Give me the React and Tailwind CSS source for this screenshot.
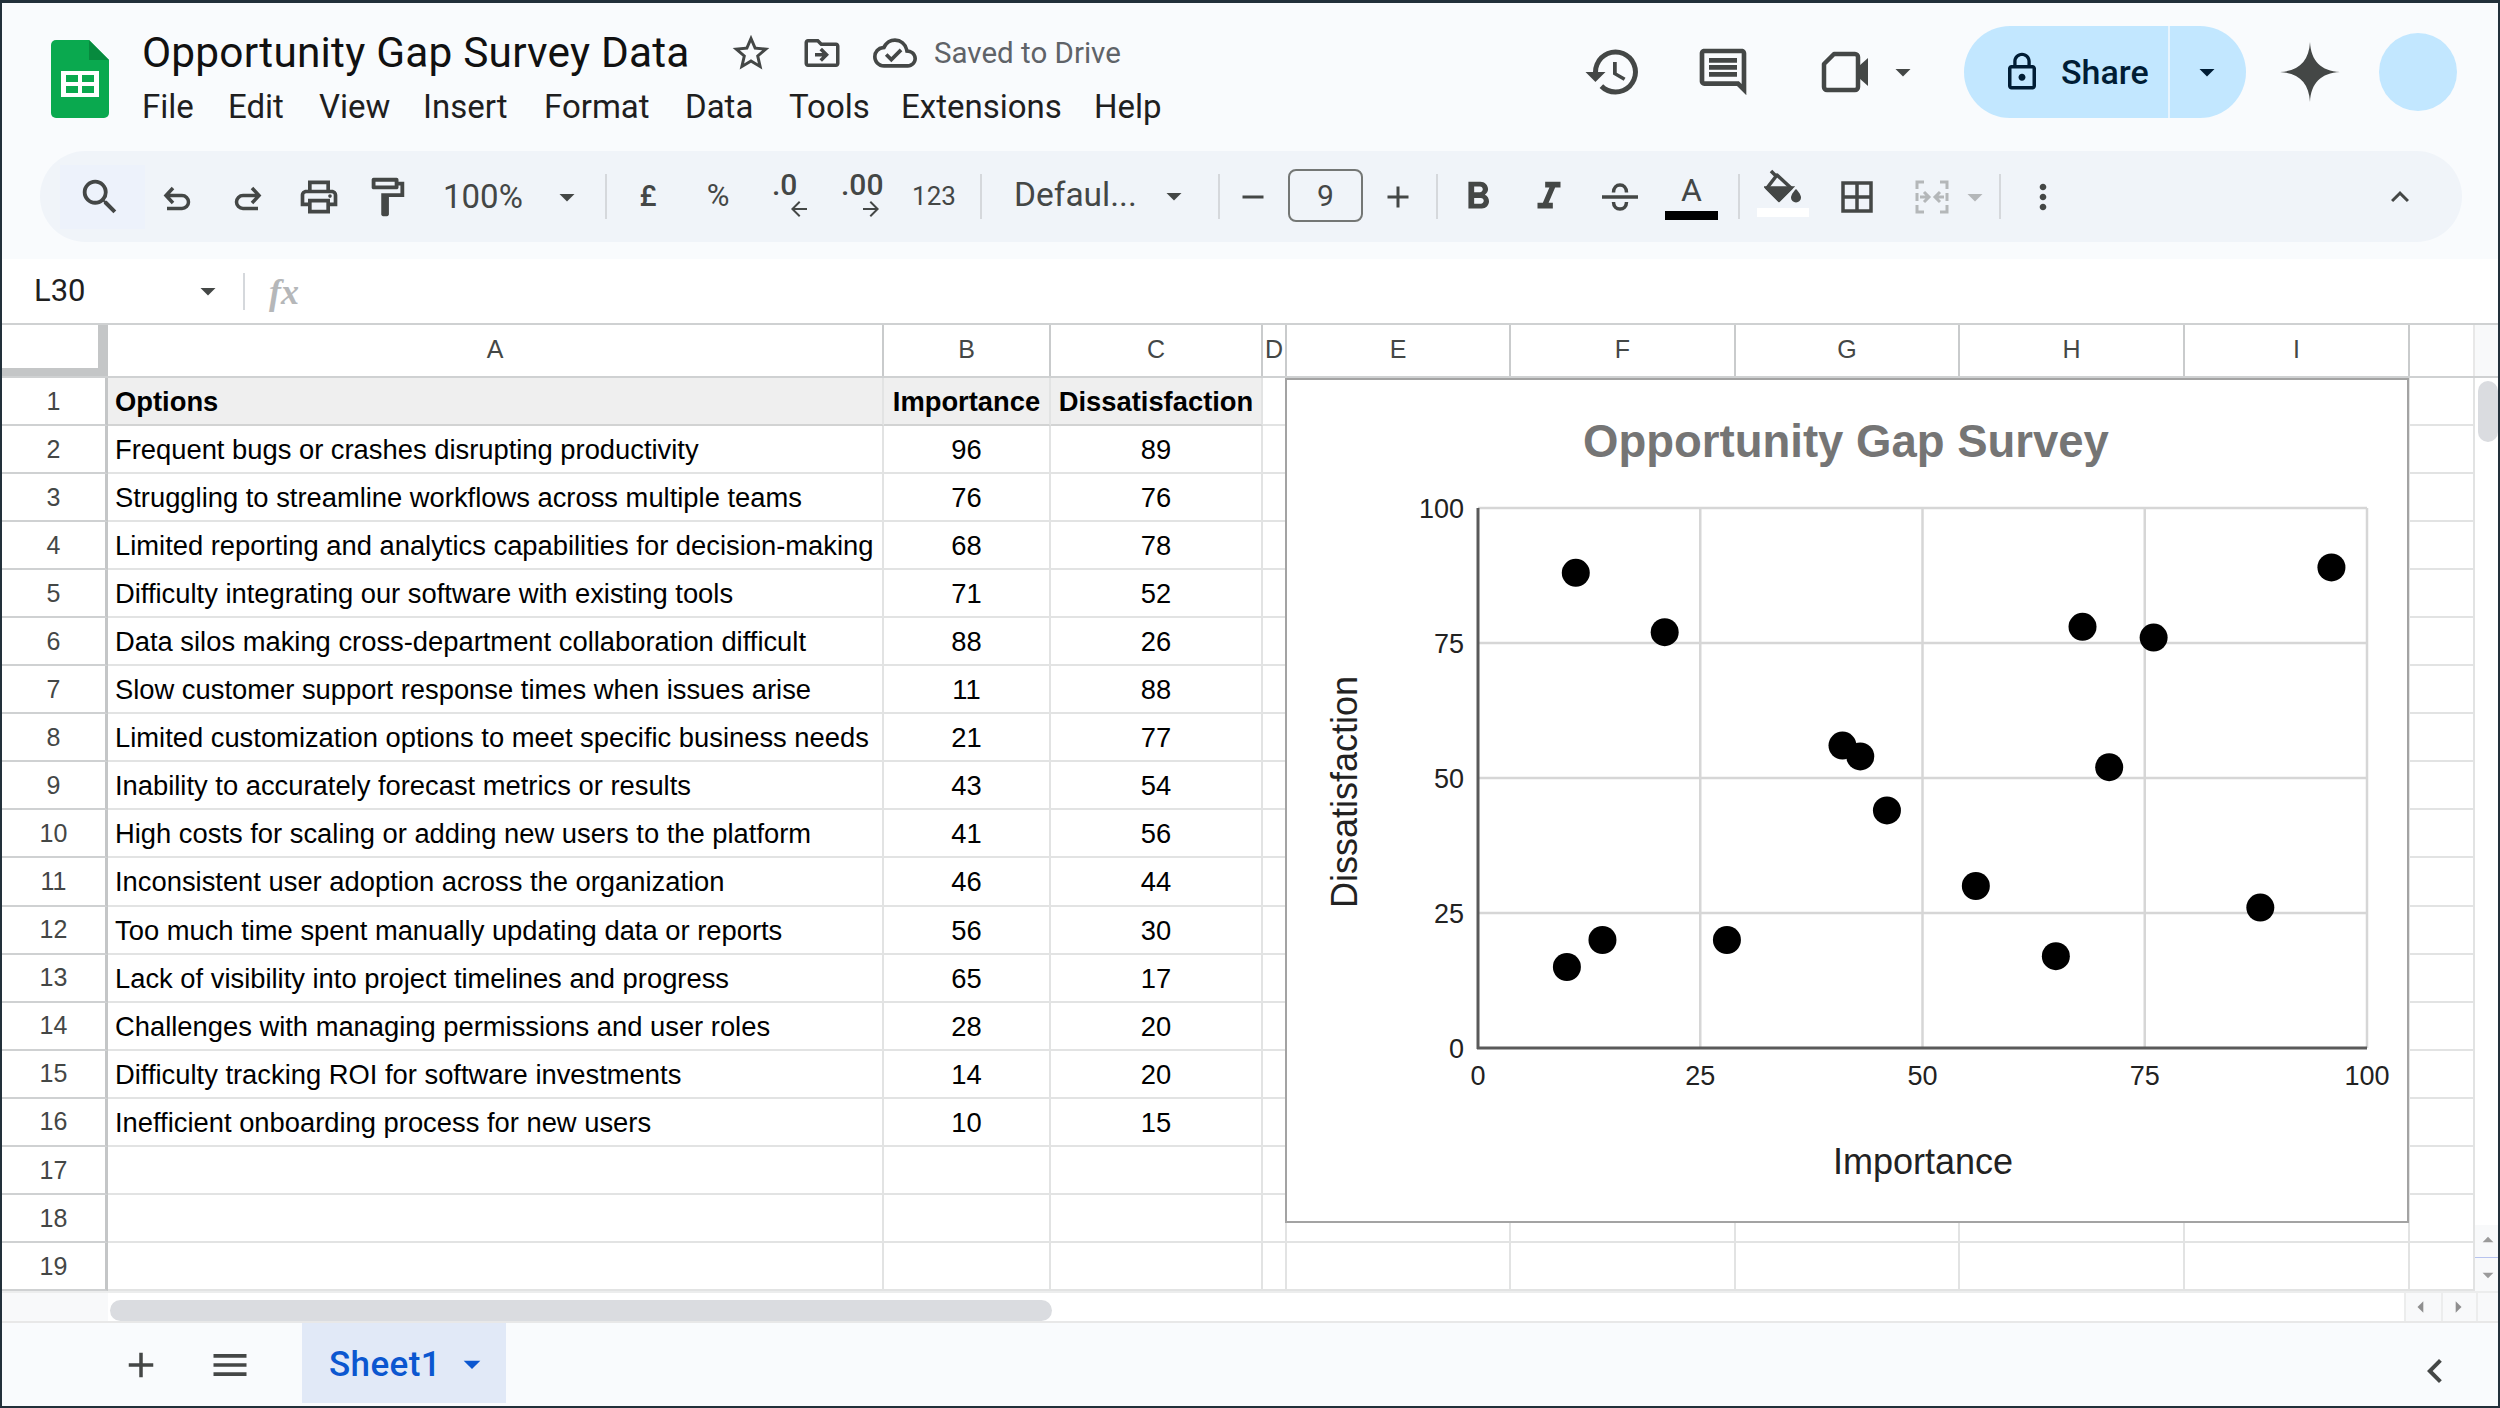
import React from "react";
import {
  MdStarBorder, MdOutlineDriveFileMove, MdOutlineCloudDone, MdHistory, MdOutlineComment,
  MdArrowDropDown, MdLockOutline, MdSearch, MdOutlinePrint, MdOutlineFormatPaint, MdAdd, MdRemove,
  MdFormatBold, MdFormatItalic, MdBorderAll, MdMoreVert, MdKeyboardArrowUp,
  MdMenu, MdChevronLeft, MdArrowBack, MdArrowForward, MdArrowDropUp, MdArrowLeft, MdArrowRight,
} from "react-icons/md";

const rows = [
  ["Options", "Importance", "Dissatisfaction"],
  ["Frequent bugs or crashes disrupting productivity", "96", "89"],
  ["Struggling to streamline workflows across multiple teams", "76", "76"],
  ["Limited reporting and analytics capabilities for decision-making", "68", "78"],
  ["Difficulty integrating our software with existing tools", "71", "52"],
  ["Data silos making cross-department collaboration difficult", "88", "26"],
  ["Slow customer support response times when issues arise", "11", "88"],
  ["Limited customization options to meet specific business needs", "21", "77"],
  ["Inability to accurately forecast metrics or results", "43", "54"],
  ["High costs for scaling or adding new users to the platform", "41", "56"],
  ["Inconsistent user adoption across the organization", "46", "44"],
  ["Too much time spent manually updating data or reports", "56", "30"],
  ["Lack of visibility into project timelines and progress", "65", "17"],
  ["Challenges with managing permissions and user roles", "28", "20"],
  ["Difficulty tracking ROI for software investments", "14", "20"],
  ["Inefficient onboarding process for new users", "10", "15"],
  ["", "", ""],
  ["", "", ""],
  ["", "", ""],
];

const X = (v) => 1478 + v * 8.89;
const Y = (v) => 1048 - v * 5.4;
const points = rows.slice(1, 16).map((r) => [Number(r[1]), Number(r[2])]);
const ticks = [0, 25, 50, 75, 100];

function Sep({ className }) {
  return <div className={"w-[2px] h-[45px] bg-[#d5d8dc] shrink-0 " + className} />;
}

function Logo() {
  return (
    <svg width="58" height="78" viewBox="0 0 58 78" className="shrink-0">
      <path d="M5 0H38L58 20V73a5 5 0 0 1-5 5H5a5 5 0 0 1-5-5V5a5 5 0 0 1 5-5z" fill="#0aa94f" />
      <path d="M38 0L58 20H38z" fill="#078a3e" />
      <rect x="10" y="31" width="38" height="26" fill="#fff" />
      <rect x="15" y="35" width="12" height="7" fill="#0aa94f" />
      <rect x="31" y="35" width="12" height="7" fill="#0aa94f" />
      <rect x="15" y="46" width="12" height="7" fill="#0aa94f" />
      <rect x="31" y="46" width="12" height="7" fill="#0aa94f" />
    </svg>
  );
}

function MergeIcon() {
  return (
    <svg width="36" height="36" viewBox="0 0 36 36" fill="none" stroke="#b4b7b9" strokeWidth="3" className="shrink-0">
      <path d="M10 3H3V10M3 14v8M3 26v7h7M26 3h7v7M33 14v8M33 26v7h-7" />
      <path d="M6 18h9M10 13l5 5-5 5M30 18h-9M26 13l-5 5 5 5" />
    </svg>
  );
}

function UndoIcon({ className }) {
  return (
    <svg width="28" height="26" viewBox="0 0 28 26" fill="none" stroke="#444746" strokeWidth="3.5" className={"shrink-0 " + className}>
      <path d="M10 2L3 9.5L10 17M3 9.5H19a6.5 6.5 0 0 1 0 13H4" />
    </svg>
  );
}

function StrikeIcon({ className }) {
  return (
    <svg width="38" height="30" viewBox="0 0 38 30" fill="none" stroke="#444746" strokeWidth="3.5" className={"shrink-0 " + className}>
      <path d="M1 15H37M25.5 10.5C25.5 5.5 22.5 3 19 3C15.5 3 12.5 5.5 12.5 10.5M12.5 20C12.5 24.5 15.5 27 19 27C22.5 27 25.5 24.5 25.5 20" />
    </svg>
  );
}

function FillIcon() {
  return (
    <svg width="38" height="34" viewBox="0 0 38 34" fill="none" stroke="#444746" strokeWidth="3.5" className="shrink-0 -mt-[8px]">
      <path d="M7 2L13 8M13 6L27 19L15 31L3 19z" strokeLinejoin="round" />
      <path d="M3 19H27L15 31z" fill="#444746" />
      <path d="M32 20C32 20 27 25 27 28.5a5 5 0 0 0 10 0C37 25 32 20 32 20z" fill="#444746" stroke="none" />
    </svg>
  );
}

function VideoIcon({ className }) {
  return (
    <svg width="50" height="42" viewBox="0 0 50 42" className={"shrink-0 " + className}>
      <path d="M13 3H34a3 3 0 0 1 3 3V36a3 3 0 0 1-3 3H6a3 3 0 0 1-3-3V13z" fill="none" stroke="#444746" strokeWidth="4.5" strokeLinejoin="round" />
      <path d="M38 15L47 7V35L38 27z" fill="#444746" />
    </svg>
  );
}

function Header() {
  return (
    <div className="h-[148px] flex pl-[49px] pt-[20px]">
      <div className="pt-[17px]"><Logo /></div>
      <div className="ml-[33px] flex flex-col">
        <div className="flex items-center h-[60px]">
          <div className="w-[545px] text-[42.4px] leading-[60px] text-[#111] font-['Roboto',sans-serif] whitespace-nowrap tracking-[0.2px]">Opportunity Gap Survey Data</div>
          <MdStarBorder className="ml-[42px] w-[44px] h-[44px] text-[#444746] shrink-0" />
          <MdOutlineDriveFileMove className="ml-[28px] w-[42px] h-[42px] text-[#444746] shrink-0" />
          <MdOutlineCloudDone className="ml-[30px] w-[44px] h-[44px] text-[#444746] shrink-0" />
          <div className="ml-[17px] text-[29.5px] text-[#5f6368] font-['Roboto',sans-serif] whitespace-nowrap">Saved to Drive</div>
        </div>
        <div className="flex items-center h-[44px] mt-[2px] text-[33px] text-[#1f1f1f] font-['Roboto',sans-serif] whitespace-nowrap">
          <span className="w-[50px]">File</span>
          <span className="ml-[36px] w-[55px]">Edit</span>
          <span className="ml-[36px] w-[68px]">View</span>
          <span className="ml-[36px] w-[85px]">Insert</span>
          <span className="ml-[36px] w-[105px]">Format</span>
          <span className="ml-[36px] w-[68px]">Data</span>
          <span className="ml-[36px] w-[76px]">Tools</span>
          <span className="ml-[36px] w-[157px]">Extensions</span>
          <span className="ml-[36px] w-[68px]">Help</span>
        </div>
      </div>
      <div className="ml-auto flex items-center h-[92px] mt-[3px] pr-[41px] shrink-0 text-[#444746]">
        <MdHistory className="w-[60px] h-[60px] shrink-0" />
        <MdOutlineComment className="ml-[52px] w-[56px] h-[56px] shrink-0" />
        <VideoIcon className="ml-[70px]" />
        <MdArrowDropDown className="ml-[14px] w-[36px] h-[36px] shrink-0" />
        <div className="ml-[43px] w-[282px] h-[92px] rounded-full bg-[#c2e7ff] flex items-center text-[#001d35] shrink-0">
          <div className="w-[206px] h-full flex items-center pl-[37px] border-r-2 border-[#e8f4fd]">
            <MdLockOutline className="w-[42px] h-[42px] shrink-0" />
            <span className="ml-[18px] text-[34px] font-medium font-['Roboto',sans-serif]">Share</span>
          </div>
          <MdArrowDropDown className="ml-[19px] w-[36px] h-[36px] shrink-0" />
        </div>
        <svg width="60" height="60" viewBox="0 0 60 60" className="ml-[34px] shrink-0">
          <path d="M30 0C31 19 41 29 60 30C41 31 31 41 30 60C29 41 19 31 0 30C19 29 29 19 30 0z" fill="#444746" />
        </svg>
        <div className="ml-[39px] w-[78px] h-[78px] rounded-full bg-[#c2e7ff] shrink-0" />
      </div>
    </div>
  );
}

function Toolbar() {
  const ink = "shrink-0 w-[36px] h-[36px] text-[#444746]";
  const big = "shrink-0 w-[46px] h-[46px] text-[#444746]";
  const label = "shrink-0 text-[#444746] font-['Roboto',sans-serif] whitespace-nowrap";
  return (
    <div className="ml-[38px] w-[2422px] h-[91px] rounded-full bg-[#f0f4f9] flex items-center pl-[20px] pr-[44px]">
      <div className="w-[85px] h-[64px] bg-[#edf2fb] flex items-center pl-[17px] shrink-0">
        <MdSearch className="w-[46px] h-[46px] text-[#444746]" />
      </div>
      <UndoIcon className="ml-[18px] mt-[4px]" />
      <UndoIcon className="ml-[43px] mt-[4px] -scale-x-100" />
      <MdOutlinePrint className="ml-[35px] shrink-0 w-[44px] h-[44px] text-[#444746]" />
      <MdOutlineFormatPaint className="ml-[23px] shrink-0 w-[46px] h-[46px] text-[#444746]" />
      <div className={"ml-[33px] w-[84px] text-[33px] " + label}>100%</div>
      <MdArrowDropDown className={"ml-[22px] " + ink} />
      <Sep className="ml-[20px]" />
      <div className={"ml-[23px] w-[36px] text-center text-[29px] font-medium " + label}>£</div>
      <div className={"ml-[34px] w-[36px] text-center text-[31px] " + label}>%</div>
      <div className="ml-[36px] w-[50px] flex flex-col items-start shrink-0 text-[#444746]">
        <span className="text-[30px] leading-[26px] font-medium font-['Roboto',sans-serif]">.0</span>
        <MdArrowBack className="w-[24px] h-[24px] ml-[15px] -mt-[1px]" />
      </div>
      <div className="ml-[14px] w-[50px] flex flex-col items-start pl-[5px] shrink-0 text-[#444746]">
        <span className="text-[30px] leading-[26px] font-medium font-['Roboto',sans-serif]">.00</span>
        <MdArrowForward className="w-[24px] h-[24px] ml-[18px] -mt-[1px]" />
      </div>
      <div className={"ml-[23px] w-[50px] text-center text-[26px] " + label}>123</div>
      <Sep className="ml-[21px]" />
      <div className={"ml-[32px] w-[120px] -mt-[2px] text-[33.5px] " + label}>Defaul...</div>
      <MdArrowDropDown className={"ml-[22px] -mt-[2px] " + ink} />
      <Sep className="ml-[26px]" />
      <MdRemove className={"ml-[15px] " + ink} />
      <div className="ml-[17px] -mt-[2px] w-[75px] h-[53px] rounded-[8px] border-2 border-[#747775] flex items-center justify-center text-[30px] text-[#444746] font-['Roboto',sans-serif] shrink-0">9</div>
      <MdAdd className={"ml-[17px] " + ink} />
      <Sep className="ml-[20px]" />
      <MdFormatBold className={"ml-[17px] " + big} />
      <MdFormatItalic className={"ml-[25px] " + big} />
      <StrikeIcon className="ml-[29px]" />
      <div className="ml-[26px] w-[53px] flex flex-col items-center shrink-0">
        <span className="text-[32px] leading-[34px] text-[#444746] font-['Roboto',sans-serif]">A</span>
        <div className="mt-[4px] w-[53px] h-[9px] bg-black" />
      </div>
      <Sep className="ml-[20px]" />
      <div className="ml-[17px] w-[52px] flex flex-col items-center shrink-0">
        <FillIcon />
        <div className="mt-[5px] w-[52px] h-[9px] bg-white" />
      </div>
      <MdBorderAll className="ml-[27px] shrink-0 w-[42px] h-[42px] text-[#444746]" />
      <div className="ml-[36px] shrink-0"><MergeIcon /></div>
      <MdArrowDropDown className="ml-[7px] shrink-0 w-[36px] h-[36px] text-[#b4b7b9]" />
      <Sep className="ml-[6px]" />
      <MdMoreVert className="ml-[22px] shrink-0 w-[40px] h-[40px] text-[#444746]" />
      <MdKeyboardArrowUp className={"ml-auto " + ink} />
    </div>
  );
}

function FormulaBar() {
  return (
    <div className="h-[64px] bg-white flex items-center pl-[32px]">
      <div className="w-[156px] text-[31px] text-[#1f1f1f] font-['Roboto',sans-serif]">L30</div>
      <MdArrowDropDown className="w-[36px] h-[36px] text-[#444746] shrink-0" />
      <div className="ml-[17px] w-[2px] h-[37px] bg-[#d5d8dc]" />
      <div className="ml-[24px] mt-[2px] text-[36px] italic font-bold text-[#b5b7b9] font-['Liberation_Serif',serif]">fx</div>
    </div>
  );
}

const colHeads = [
  ["A", "w-[776px]"], ["B", "w-[167px]"], ["C", "w-[212px]"], ["D", "w-[24px]"], ["E", "w-[224px]"],
  ["F", "w-[225px]"], ["G", "w-[224px]"], ["H", "w-[225px]"], ["I", "w-[225px]"],
];

function ColHeader() {
  return (
    <div className="flex h-[55px] border-t-2 border-b-2 border-[#cfd1d2] text-[25px] text-[#444746] shrink-0">
      <div className="w-[106px] shrink-0 flex bg-[#c4c6c7]">
        <div className="w-[96px] h-[43px] bg-white" />
      </div>
      {colHeads.map(([c, w]) => (
        <div key={c} className={w + " shrink-0 border-r-2 border-[#c9cbcc] flex items-center justify-center pb-[2px]"}>{c}</div>
      ))}
      <div className="w-[65px] shrink-0 border-r-2 border-[#e8e8e8]" />
      <div className="flex-1 bg-[#f8f9fa]" />
    </div>
  );
}

function Row({ n, r }) {
  const head = n === 1;
  const line = "border-r-2 border-b-2 border-[#e2e3e3]";
  const hd = head ? " font-bold bg-[#efefef] border-b-[#d2d3d3]" : "";
  return (
    <div className="flex h-[48.05px] shrink-0 text-black">
      <div className="w-[106px] shrink-0 border-r-[3px] border-b-2 border-r-[#c4c6c7] border-b-[#cfd1d2] flex items-center justify-center text-[25px] text-[#444746] pt-[1px]">{n}</div>
      <div className={"w-[776px] shrink-0 pl-[7px] pt-[1px] flex items-center whitespace-nowrap overflow-hidden " + line + hd}>{r[0]}</div>
      <div className={"w-[167px] shrink-0 pt-[1px] flex items-center justify-center " + line + hd}>{r[1]}</div>
      <div className={"w-[212px] shrink-0 pt-[1px] flex items-center justify-center " + line + hd}>{r[2]}</div>
      <div className={"w-[24px] shrink-0 " + line} />
      <div className={"w-[224px] shrink-0 " + line} />
      <div className={"w-[225px] shrink-0 " + line} />
      <div className={"w-[224px] shrink-0 " + line} />
      <div className={"w-[225px] shrink-0 " + line} />
      <div className={"w-[225px] shrink-0 " + line} />
      <div className="w-[65px] shrink-0 border-r-2 border-b-2 border-[#e2e3e3]" />
    </div>
  );
}

function Chart() {
  const num = { fontSize: 27, fill: "#222" };
  return (
    <div className="absolute left-[1283px] top-0 w-[1124px] h-[845px] border-2 border-[#a3a3a3] bg-white">
      <svg width="1120" height="841" viewBox="1287 380 1120 841" className="block" fontFamily="'Liberation Sans', Arial, sans-serif">
        <text x="1846" y="457" textAnchor="middle" fontSize="45.5" fontWeight="700" fill="#757575">Opportunity Gap Survey</text>
        {ticks.slice(1).map((t) => (
          <line key={"v" + t} x1={X(t)} x2={X(t)} y1={508} y2={1048} stroke="#d6d6d6" strokeWidth="2.5" />
        ))}
        {ticks.slice(1).map((t) => (
          <line key={"h" + t} x1={1478} x2={2367} y1={Y(t)} y2={Y(t)} stroke="#d6d6d6" strokeWidth="2.5" />
        ))}
        <line x1="1478" x2="1478" y1="508" y2="1049" stroke="#5a5a5a" strokeWidth="3" />
        <line x1="1477" x2="2367" y1="1048" y2="1048" stroke="#5a5a5a" strokeWidth="3" />
        {ticks.map((t) => (
          <text key={"y" + t} x="1464" y={Y(t) + 10} textAnchor="end" {...num}>{t}</text>
        ))}
        {ticks.map((t) => (
          <text key={"x" + t} x={X(t)} y="1085" textAnchor="middle" {...num}>{t}</text>
        ))}
        <text x="1923" y="1174" textAnchor="middle" fontSize="36" fill="#222">Importance</text>
        <text transform="translate(1357 792) rotate(-90)" textAnchor="middle" fontSize="36" fill="#222">Dissatisfaction</text>
        {points.map(([x, y], i) => (
          <circle key={i} cx={X(x)} cy={Y(y)} r="14" fill="#000" />
        ))}
      </svg>
    </div>
  );
}

function VScroll() {
  return (
    <div className="flex-1 flex flex-col">
      <div className="pl-[3px] pt-[3px] h-[847px]">
        <div className="w-[20px] h-[61px] rounded-full bg-[#dadce0]" />
      </div>
      <div className="flex-1 bg-[#f8f9fa] flex flex-col items-center text-[#9a9a9a]">
        <MdArrowDropUp className="w-[26px] h-[26px] mt-[2px]" />
        <div className="mt-[4px] w-full h-[1px] bg-[#b7c3ee]" />
        <MdArrowDropDown className="w-[26px] h-[26px] mt-[4px]" />
      </div>
    </div>
  );
}

function HScroll() {
  return (
    <div className="flex h-[32px] border-b-2 border-[#e8e8e8] shrink-0 border-t-2 border-t-[#eceded]">
      <div className="w-[106px] bg-[#f8f9fa] shrink-0" />
      <div className="w-[2296px] flex items-end pl-[2px] bg-white">
        <div className="w-[942px] h-[21px] rounded-full bg-[#dadce0]" />
      </div>
      <div className="w-[37px] bg-[#f8f9fa] flex items-center justify-center pr-[5px] border-l-2 border-[#eceded] text-[#8f8f8f] shrink-0"><MdArrowLeft className="w-[28px] h-[28px]" /></div>
      <div className="w-[35px] bg-[#f8f9fa] flex items-center justify-center pr-[3px] border-l-2 border-[#eceded] text-[#8f8f8f] shrink-0"><MdArrowRight className="w-[28px] h-[28px]" /></div>
      <div className="flex-1 bg-[#f8f9fa] border-l-2 border-[#eceded]" />
    </div>
  );
}

function TabBar() {
  return (
    <div className="flex-1 bg-[#f9fbfd] flex items-stretch">
      <div className="flex items-center">
        <MdAdd className="ml-[118px] w-[42px] h-[42px] text-[#444746]" />
        <MdMenu className="ml-[46px] w-[44px] h-[44px] text-[#444746]" />
      </div>
      <div className="ml-[50px] w-[204px] bg-[#e1e9f7] flex items-center pl-[27px] text-[#0b57d0] mb-[3px]">
        <span className="text-[35px] pt-[4px] font-medium font-['Roboto',sans-serif] tracking-[0.4px]">Sheet1</span>
        <MdArrowDropDown className="ml-[11px] w-[40px] h-[40px] mt-[2px]" />
      </div>
      <div className="ml-auto flex items-center pr-[39px] pt-[12px]">
        <MdChevronLeft className="w-[48px] h-[48px] text-[#444746]" />
      </div>
    </div>
  );
}

export default function App() {
  return (
    <div className="w-[2500px] h-[1408px] border-2 border-t-[3px] border-[#22303a] bg-[#f9fbfd] flex flex-col overflow-hidden text-[27.35px] font-['Liberation_Sans',Arial,sans-serif]">
      <Header />
      <Toolbar />
      <div className="h-[17px] shrink-0" />
      <FormulaBar />
      <div className="bg-white flex flex-col shrink-0">
        <ColHeader />
        <div className="flex h-[913px]">
          <div className="relative w-[2473px] shrink-0">
            {rows.map((r, i) => <Row key={i} n={i + 1} r={r} />)}
            <Chart />
          </div>
          <VScroll />
        </div>
        <HScroll />
      </div>
      <TabBar />
    </div>
  );
}
